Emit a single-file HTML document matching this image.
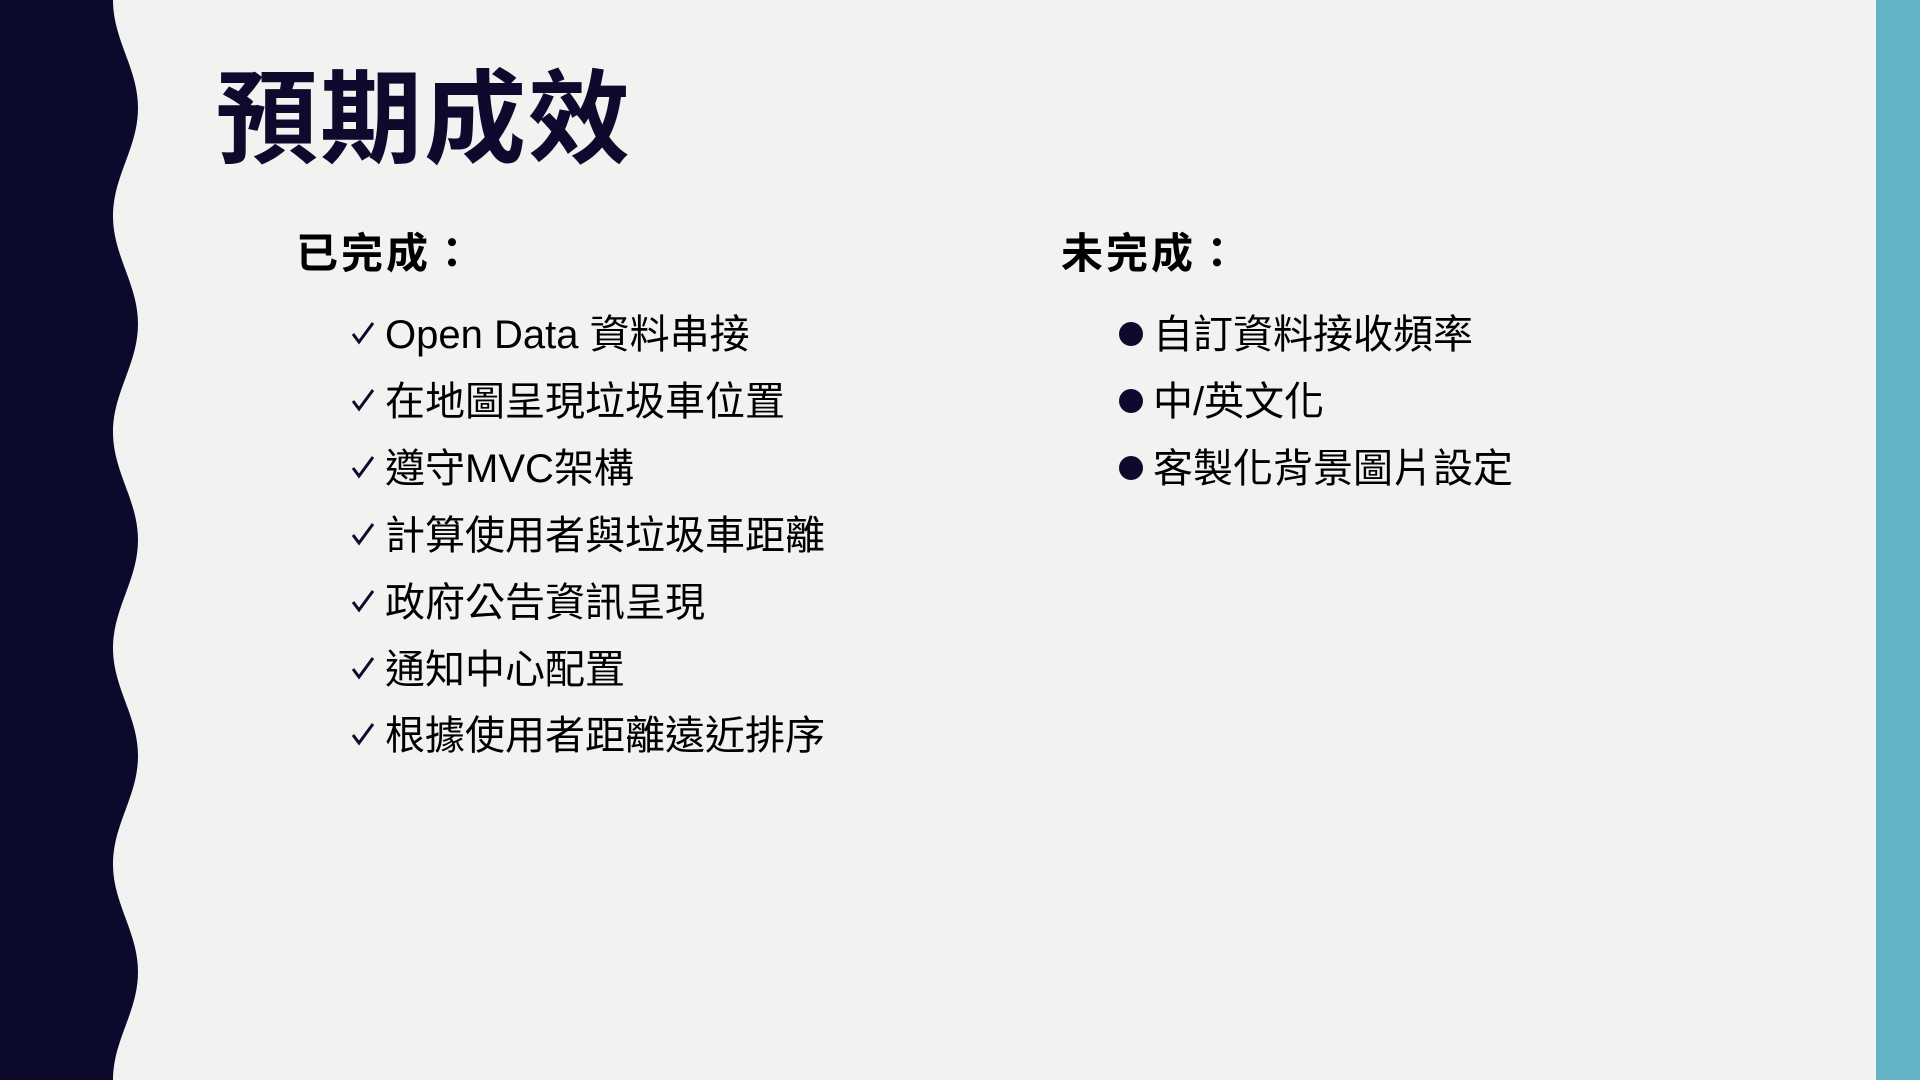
<!DOCTYPE html>
<html><head><meta charset="utf-8"><style>
html,body{margin:0;padding:0;}
body{width:1920px;height:1080px;background:#f2f2f0;position:relative;overflow:hidden;font-family:"Liberation Sans","Noto Sans CJK TC",sans-serif;}
.t{position:absolute;white-space:nowrap;line-height:60px;}
.title{left:216px;top:60px;line-height:120px;font-size:102px;font-weight:700;color:#0d0a2e;letter-spacing:2px;}
.h{font-size:42px;font-weight:700;color:#000;letter-spacing:3px;}
.i{font-size:40px;color:#000;letter-spacing:0px;}
.ck{position:absolute;left:351px;width:24px;height:24px;}
.bl{position:absolute;left:1119px;width:24px;height:24px;border-radius:50%;background:#0d0a2e;}
</style></head><body>
<svg width="1920" height="1080" style="position:absolute;left:0;top:0">
<path fill="#0b0a2c" d="M0,0 L113,0 C113,40 138,68 138,108 C138,148 113,176 113,216 C113,256 138,284 138,324 C138,364 113,392 113,432 C113,472 138,500 138,540 C138,580 113,608 113,648 C113,688 138,716 138,756 C138,796 113,824 113,864 C113,904 138,932 138,972 C138,1012 113,1040 113,1080 L0,1080 Z"/>
<rect x="1876" y="0" width="44" height="1080" fill="#63b3c7"/>
</svg>
<div class="t title">預期成效</div>
<div class="t h" style="left:296px;top:224px">已完成：</div>
<div class="t h" style="left:1061px;top:224px">未完成：</div>

<svg class="ck" style="top:321px" viewBox="0 0 24 24"><path d="M2 13 L8 21 L22 2" fill="none" stroke="#0d0a2e" stroke-width="3"/></svg>
<div class="t i" style="left:385px;top:305px">Open Data 資料串接</div>
<svg class="ck" style="top:388px" viewBox="0 0 24 24"><path d="M2 13 L8 21 L22 2" fill="none" stroke="#0d0a2e" stroke-width="3"/></svg>
<div class="t i" style="left:385px;top:372px">在地圖呈現垃圾車位置</div>
<svg class="ck" style="top:455px" viewBox="0 0 24 24"><path d="M2 13 L8 21 L22 2" fill="none" stroke="#0d0a2e" stroke-width="3"/></svg>
<div class="t i" style="left:385px;top:439px">遵守MVC架構</div>
<svg class="ck" style="top:522px" viewBox="0 0 24 24"><path d="M2 13 L8 21 L22 2" fill="none" stroke="#0d0a2e" stroke-width="3"/></svg>
<div class="t i" style="left:385px;top:506px">計算使用者與垃圾車距離</div>
<svg class="ck" style="top:589px" viewBox="0 0 24 24"><path d="M2 13 L8 21 L22 2" fill="none" stroke="#0d0a2e" stroke-width="3"/></svg>
<div class="t i" style="left:385px;top:573px">政府公告資訊呈現</div>
<svg class="ck" style="top:656px" viewBox="0 0 24 24"><path d="M2 13 L8 21 L22 2" fill="none" stroke="#0d0a2e" stroke-width="3"/></svg>
<div class="t i" style="left:385px;top:640px">通知中心配置</div>
<svg class="ck" style="top:722px" viewBox="0 0 24 24"><path d="M2 13 L8 21 L22 2" fill="none" stroke="#0d0a2e" stroke-width="3"/></svg>
<div class="t i" style="left:385px;top:706px">根據使用者距離遠近排序</div>

<div class="bl" style="top:322px"></div><div class="t i" style="left:1153px;top:305px">自訂資料接收頻率</div>
<div class="bl" style="top:389px"></div><div class="t i" style="left:1153px;top:372px">中/英文化</div>
<div class="bl" style="top:456px"></div><div class="t i" style="left:1153px;top:439px">客製化背景圖片設定</div>
</body></html>
